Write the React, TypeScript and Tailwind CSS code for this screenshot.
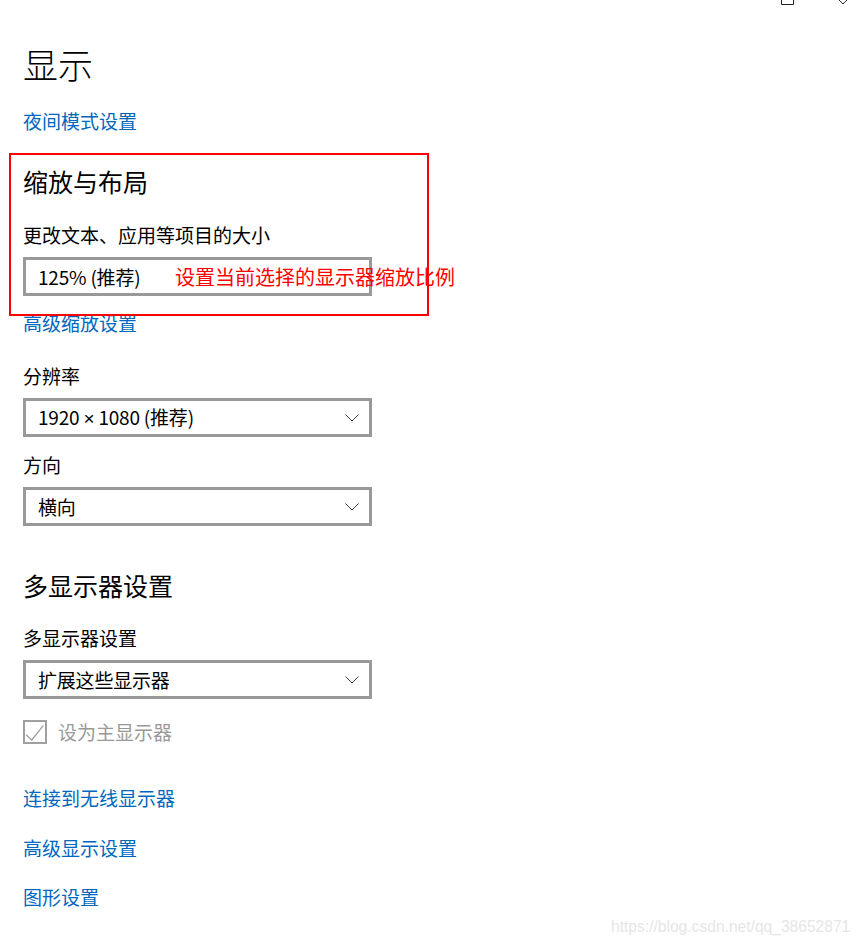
import type { ReactNode } from "react";

const font = {
  fontFamily: '"Noto Sans CJK SC", "Noto Sans", sans-serif',
};

const Chevron = () => (
  <svg width="14" height="8" viewBox="0 0 14 8" className="shrink-0">
    <polyline points="0.5,0.5 7,7 13.5,0.5" fill="none" stroke="#444" strokeWidth="1" />
  </svg>
);

const Select = ({ value, arrow = true }: { value: ReactNode; arrow?: boolean }) => (
  <div className="flex h-[39px] w-[349px] items-center justify-between border-[3px] border-[#999] bg-white pl-[12px] pr-[10px] text-[19px] leading-[24px] tracking-[-0.2px] text-black">
    <span>{value}</span>
    {arrow && <Chevron />}
  </div>
);

const Link = ({ text, className }: { text: string; className: string }) => (
  <div className={`text-[19px] leading-[24px] text-[#0067c0] ${className}`}>{text}</div>
);

export default function App() {
  return (
    <div className="relative h-[945px] w-[861px] overflow-hidden bg-white" style={font}>
      {/* window chrome, cut off at the top */}
      <svg className="absolute left-[770px] top-0" width="91" height="8" viewBox="0 0 91 8">
        <polyline points="11.5,-2 11.5,4.5 23.5,4.5 23.5,-2" fill="none" stroke="#222" strokeWidth="1" />
        <line x1="67" y1="-2" x2="73" y2="4" stroke="#222" strokeWidth="1" />
        <line x1="79" y1="-2" x2="73" y2="4" stroke="#222" strokeWidth="1" />
      </svg>

      <div className="flex flex-col items-start px-[23px]">
        <h1 className="mt-[44px] text-[35px] font-light leading-[40px] text-black">显示</h1>
        <Link text="夜间模式设置" className="mt-[25px]" />

        <h2 className="mt-[32px] text-[25px] leading-[32px] text-black">缩放与布局</h2>
        <div className="mt-[26px] text-[19px] leading-[24px] text-black">更改文本、应用等项目的大小</div>
        <div className="mt-[10px]">
          <Select value="125% (推荐)" arrow={false} />
        </div>
        <Link text="高级缩放设置" className="mt-[15px]" />

        <div className="mt-[29px] text-[19px] leading-[24px] text-black">分辨率</div>
        <div className="mt-[10px]">
          <Select
            value={
              <>
                1920 <span style={{ fontFamily: '"Liberation Sans", sans-serif' }}>×</span> 1080 (推荐)
              </>
            }
          />
        </div>
        <div className="mt-[16px] text-[19px] leading-[24px] text-black">方向</div>
        <div className="mt-[10px]">
          <Select value="横向" />
        </div>

        <h2 className="mt-[43px] text-[25px] leading-[32px] text-black">多显示器设置</h2>
        <div className="mt-[25px] text-[19px] leading-[24px] text-black">多显示器设置</div>
        <div className="mt-[10px]">
          <Select value="扩展这些显示器" />
        </div>

        <div className="mt-[21px] flex items-center gap-[11px]">
          <div className="flex h-[24px] w-[24px] items-center justify-center border-2 border-[#a0a0a0]">
            <svg width="20" height="20" viewBox="0 0 20 20">
              <polyline points="1,12.7 6.7,18 18.3,3.7" fill="none" stroke="#a0a0a0" strokeWidth="1.3" />
            </svg>
          </div>
          <span className="text-[19px] leading-[24px] text-[#999]">设为主显示器</span>
        </div>

        <Link text="连接到无线显示器" className="mt-[42px]" />
        <Link text="高级显示设置" className="mt-[26px]" />
        <Link text="图形设置" className="mt-[25px]" />
      </div>

      {/* red annotation */}
      <div className="absolute left-[9px] top-[153px] h-[163px] w-[420px] border-2 border-[#f00]" />
      <div className="absolute left-[175px] top-[265px] text-[20px] leading-[24px] text-[#f00]">
        设置当前选择的显示器缩放比例
      </div>

      {/* watermark */}
      <div
        className="absolute left-[611px] top-[917px] text-[15.6px] leading-[20px] text-[#e6e6e6]"
        style={{ fontFamily: '"Liberation Sans", sans-serif' }}
      >
        https://blog.csdn.net/qq_38652871
      </div>
    </div>
  );
}
